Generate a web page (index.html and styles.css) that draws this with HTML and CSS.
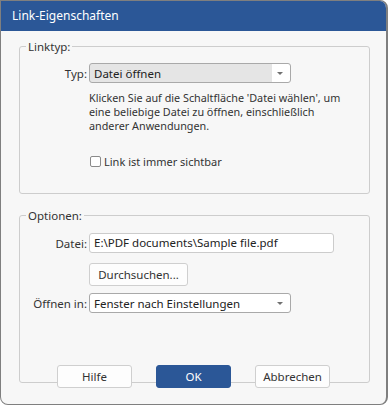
FILE: index.html
```html
<!DOCTYPE html>
<html lang="de">
<head>
  <meta charset="UTF-8">
  <title>Link-Eigenschaften</title>
  <link rel="stylesheet" href="styles.css">
</head>
<body>

  <div class="window">
    <div class="titlebar">Link-Eigenschaften</div>

    <div class="content">
      <!-- Link type -->
      <fieldset class="group group-type">
        <legend>Linktyp:</legend>
        <div class="row">
          <span class="row-label">Typ:</span>
          <div class="select select-filled">
            <span class="select-value">Datei öffnen</span>
            <span class="select-arrow"></span>
          </div>
        </div>
        <p class="hint">Klicken Sie auf die Schaltfläche 'Datei wählen', um<br>eine beliebige Datei zu öffnen, einschließlich<br>anderer Anwendungen.</p>
        <label class="check"><span class="check-box"></span>Link ist immer sichtbar</label>
      </fieldset>

      <!-- Options -->
      <fieldset class="group group-options">
        <legend>Optionen:</legend>
        <div class="row">
          <span class="row-label">Datei:</span>
          <div class="textbox">E:\PDF documents\Sample file.pdf</div>
        </div>
        <div class="row row-browse">
          <span></span>
          <button class="button button-browse">Durchsuchen...</button>
        </div>
        <div class="row row-open">
          <span class="row-label">Öffnen in:</span>
          <div class="select">
            <span class="select-value">Fenster nach Einstellungen</span>
            <span class="select-arrow"></span>
          </div>
        </div>
      </fieldset>

      <div class="actions">
        <button class="button">Hilfe</button>
        <button class="button button-primary">OK</button>
        <button class="button">Abbrechen</button>
      </div>
    </div>
  </div>

</body>
</html>
```

FILE: styles.css
```css
/* Page */
body {
  margin: 0;
  font-family: 'Noto Sans', 'Open Sans', sans-serif;
  font-size: 11px;
  color: #333;
  background-color: #ffffff;
}

/* Dialog window */
.window {
  width: 388px;
  height: 405px;
  box-sizing: border-box;
  background-color: #f7f7f7;
  border: 1px solid #7f7f7f;
  border-right-width: 2px;
  border-radius: 0 8px 8px 8px;
  overflow: hidden;
  display: flex;
  flex-direction: column;
}

.titlebar {
  height: 30px;
  background-color: #2b5797;
  color: #ffffff;
  font-size: 12px;
  line-height: 30px;
  padding-left: 11px;
}

.content {
  padding: 8px 16px 0 18px;
}

/* Group boxes */
.group {
  margin: 0;
  padding: 0;
  border: 1px solid #cdcdcd;
  border-radius: 3px;
}

.group legend {
  margin-left: 6px;
  padding: 0 2px;
  font-size: 11.5px;
}

.group-type {
  height: 155px;
  box-sizing: border-box;
  padding-top: 1px;
}

.group-options {
  margin-top: 14px;
  height: 175px;
  box-sizing: border-box;
  padding-top: 2px;
}

/* Label + control rows */
.row {
  display: grid;
  grid-template-columns: 67px auto;
  column-gap: 2px;
  align-items: center;
  margin-top: 8px;
}

.row-browse {
  margin-top: 10px;
}

.row-open {
  margin-top: 7px;
}

.row-label {
  text-align: right;
  font-size: 11.5px;
}

.select {
  position: relative;
  width: 202px;
  height: 20px;
  box-sizing: border-box;
  border: 1px solid #a9a9a9;
  border-radius: 3px;
  background-color: #ffffff;
  display: flex;
  align-items: center;
  padding-left: 4px;
  font-size: 11.5px;
  color: #222;
}

.select-filled {
  background: linear-gradient(to right, #e5e5e5 0, #e5e5e5 182px, #ffffff 182px);
}

.select-arrow {
  position: absolute;
  right: 7px;
  top: 8px;
  border-left: 3px solid transparent;
  border-right: 3px solid transparent;
  border-top: 3px solid #707070;
}

.textbox {
  width: 245px;
  height: 20px;
  box-sizing: border-box;
  border: 1px solid #cccccc;
  border-radius: 3px;
  background-color: #ffffff;
  padding-left: 4px;
  line-height: 18px;
  font-size: 11.5px;
  color: #222;
}

.hint {
  margin: 8px 0 0 69px;
  white-space: nowrap;
  line-height: 14px;
  font-size: 10.8px;
}

.check {
  display: flex;
  align-items: center;
  margin: 21px 0 0 70px;
}

.check-box {
  width: 11px;
  height: 11px;
  box-sizing: border-box;
  border: 1px solid #8a8a8a;
  border-radius: 2px;
  background-color: #ffffff;
  margin-right: 3px;
}

/* Buttons */
.button {
  width: 75px;
  height: 23px;
  padding: 0;
  font-family: inherit;
  font-size: 11.5px;
  color: #333;
  background-color: #fdfdfd;
  border: 1px solid #cfcfcf;
  border-radius: 3px;
}

.button-browse {
  width: 99px;
}

.button-primary {
  background-color: #2b5797;
  border-color: #2b5797;
  color: #ffffff;
}

.actions {
  display: flex;
  justify-content: center;
  gap: 24px;
  margin-top: -18px;
  margin-left: -2px;
}
```
